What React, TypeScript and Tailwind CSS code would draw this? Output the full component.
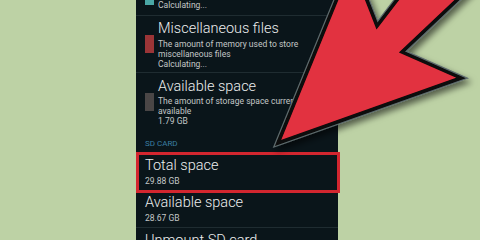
import React from "react";

const Sub = ({ children }: { children: React.ReactNode }) => (
  <div className="text-[8.5px] leading-[10px] text-[#c3c7c7] whitespace-nowrap">{children}</div>
);

const Title = ({ children }: { children: React.ReactNode }) => (
  <div className="text-[14.5px] leading-[16px] font-light text-[#eceeee] whitespace-nowrap">{children}</div>
);

const Divider = () => <div className="h-px shrink-0 bg-[#1f2c31]" />;

const Arrow = () => (
  <svg
    className="absolute left-0 top-0 pointer-events-none"
    width="480"
    height="240"
    viewBox="0 0 480 240"
  >
    <defs>
      <filter id="shadow" x="-20%" y="-20%" width="140%" height="140%">
        <feDropShadow dx="3" dy="4" stdDeviation="3" floodColor="#000" floodOpacity="0.55" />
      </filter>
    </defs>
    <g filter="url(#shadow)">
      <polygon
        points="278,143 352,-38 377,26 410,-17 475,-17 402,52 461,78"
        fill="none"
        stroke="#5d6a6c"
        strokeWidth="6"
        strokeLinejoin="miter"
      />
      <polygon
        points="278,143 352,-38 377,26 410,-17 475,-17 402,52 461,78"
        fill="#e2303f"
        stroke="#080808"
        strokeWidth="3.5"
        strokeLinejoin="miter"
      />
    </g>
  </svg>
);

export default function App() {
  return (
    <div
      className="relative w-[480px] h-[240px] overflow-hidden bg-[#bdd2a5] flex"
      style={{ fontFamily: "Roboto, 'Noto Sans', sans-serif" }}
    >
      <div className="ml-[136px] w-[202px] h-[240px] shrink-0 bg-[#0a151a] flex flex-col">
        {/* cut-off row at top */}
        <div className="h-[15px] shrink-0 flex items-start">
          <div className="ml-[9px] w-[9px] h-[5px] bg-[#4aa7a6]" />
          <div className="ml-[4px]">
            <Sub>Calculating...</Sub>
          </div>
        </div>
        <Divider />
        <div className="h-[56px] shrink-0 flex items-start">
          <div className="ml-[9px] mt-[19px] w-[9px] h-[18px] bg-[#9b3537]" />
          <div className="ml-[4px] pt-[5px] flex flex-col gap-[2px]">
            <Title>Miscellaneous files</Title>
            <div>
              <Sub>The amount of memory used to store</Sub>
              <Sub>miscellaneous files</Sub>
              <Sub>Calculating...</Sub>
            </div>
          </div>
        </div>
        <Divider />
        <div className="h-[53px] shrink-0 flex items-start">
          <div className="ml-[9px] mt-[20px] w-[9px] h-[18px] bg-[#4a4646]" />
          <div className="ml-[4px] pt-[6px] flex flex-col gap-[1px]">
            <Title>Available space</Title>
            <div>
              <Sub>The amount of storage space currently</Sub>
              <Sub>available</Sub>
              <Sub>1.79 GB</Sub>
            </div>
          </div>
        </div>
        <div className="shrink-0 mt-[13px] ml-[9px] text-[8px] leading-[10px] text-[#3a7fa3]">SD CARD</div>
        <div className="shrink-0 mt-[3px] w-[204px] h-[41px] border-[3px] border-[#d3262f] pl-[6px] pt-[3px] flex flex-col gap-[2px]">
          <Title>Total space</Title>
          <Sub>29.88 GB</Sub>
        </div>
        <div className="shrink-0 mt-[2px] pl-[9px] flex flex-col gap-[2px]">
          <Title>Available space</Title>
          <Sub>28.67 GB</Sub>
        </div>
        <div className="shrink-0 mt-[4px]">
          <Divider />
        </div>
        <div className="shrink-0 mt-[5px] pl-[9px]">
          <Title>Unmount SD card</Title>
        </div>
      </div>
      <Arrow />
    </div>
  );
}
